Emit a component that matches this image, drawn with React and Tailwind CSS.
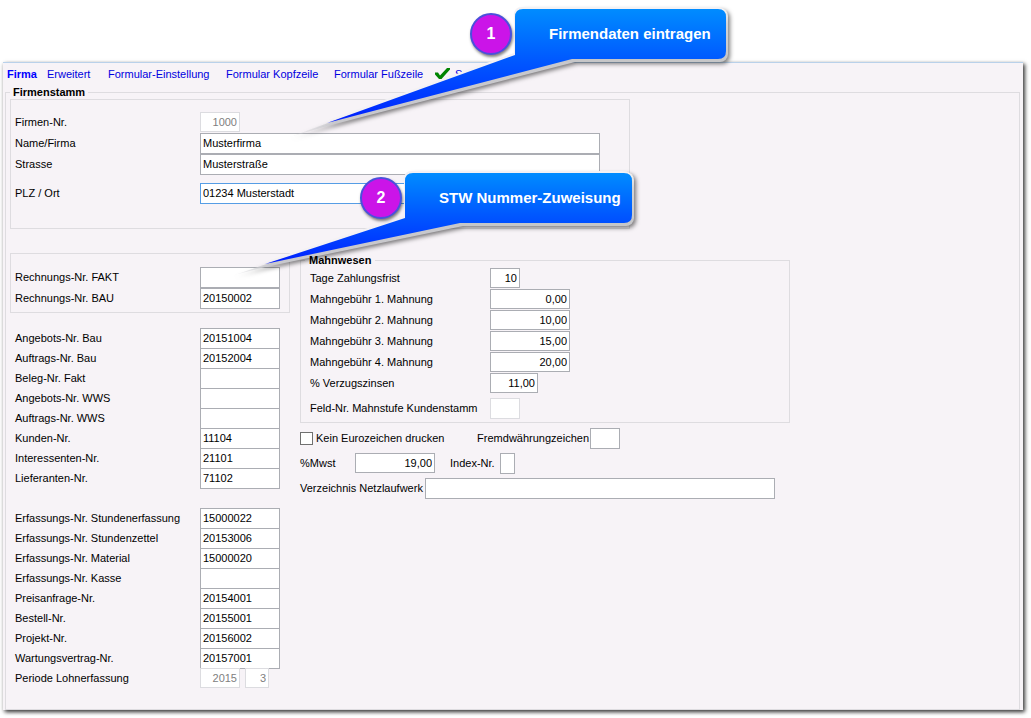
import React from "react";

const FIELD = "h-[21px] border bg-white px-[2px] pb-px outline-none";

function Row({ id, label, value = "", width = "w-20", border = "border-[#abadb3]", gap = "" }) {
  return (
    <div className={`flex items-start ${gap}`}>
      <label htmlFor={id} className="w-[185px] shrink-0 leading-5">{label}</label>
      <input id={id} defaultValue={value} className={`${FIELD} ${width} ${border}`} />
    </div>
  );
}

const NUMBERS = [
  ["Angebots-Nr. Bau", "20151004"],
  ["Auftrags-Nr. Bau", "20152004"],
  ["Beleg-Nr. Fakt", ""],
  ["Angebots-Nr. WWS", ""],
  ["Auftrags-Nr. WWS", ""],
  ["Kunden-Nr.", "11104"],
  ["Interessenten-Nr.", "21101"],
  ["Lieferanten-Nr.", "71102"],
];

const RECORDS = [
  ["Erfassungs-Nr. Stundenerfassung", "15000022"],
  ["Erfassungs-Nr. Stundenzettel", "20153006"],
  ["Erfassungs-Nr. Material", "15000020"],
  ["Erfassungs-Nr. Kasse", ""],
  ["Preisanfrage-Nr.", "20154001"],
  ["Bestell-Nr.", "20155001"],
  ["Projekt-Nr.", "20156002"],
  ["Wartungsvertrag-Nr.", "20157001"],
];

const DUNNING = [
  ["Tage Zahlungsfrist", "10", "w-[30px]"],
  ["Mahngebühr 1. Mahnung", "0,00", "w-20"],
  ["Mahngebühr 2. Mahnung", "10,00", "w-20"],
  ["Mahngebühr 3. Mahnung", "15,00", "w-20"],
  ["Mahngebühr 4. Mahnung", "20,00", "w-20"],
  ["% Verzugszinsen", "11,00", "w-12"],
];

const TABS = ["Erweitert", "Formular-Einstellung", "Formular Kopfzeile", "Formular Fußzeile"];

function Callout({ id, number, text, width, outline, tail, tipX, fadeX, depth, place, size }) {
  return (
    <div className={`absolute ${place} ${size} h-[50px] font-bold`}>
      <svg className="absolute inset-0 overflow-visible" width={width} height="50" aria-hidden="true">
        <defs>
          <linearGradient id={`${id}-fill`} gradientUnits="userSpaceOnUse" x1="0" y1="0" x2="0" y2={depth}>
            <stop offset="0" stopColor="#008cff" />
            <stop offset="0.45" stopColor="#0058ff" />
            <stop offset="0.85" stopColor="#0030ff" />
            <stop offset="1" stopColor="#0018ff" />
          </linearGradient>
          <linearGradient id={`${id}-rim`} gradientUnits="userSpaceOnUse" x1="0" y1="0" x2="0" y2="50">
            <stop offset="0" stopColor="#f2f2f2" />
            <stop offset="0.3" stopColor="#d4d4d6" />
            <stop offset="1" stopColor="#c6c6c8" />
          </linearGradient>
          <linearGradient id={`${id}-tip`} gradientUnits="userSpaceOnUse" x1={tipX} y1="0" x2={fadeX} y2="0">
            <stop offset="0" stopColor="#d8d8dc" stopOpacity="0" />
            <stop offset="1" stopColor="#c8c8cc" />
          </linearGradient>
        </defs>
        <g style={{ filter: "drop-shadow(2px 2px 2px rgba(0,0,0,0.5))" }}>
          <path d={tail} fill={`url(#${id}-tip)`} />
          <rect x="1" y="-1" width={width + 1} height="54" rx="8" fill={`url(#${id}-rim)`} />
        </g>
        <path d={outline} transform="translate(-1,-2)" fill="#f3f1f4" />
        <path d={outline} fill={`url(#${id}-fill)`} />
      </svg>
      <div className="absolute -left-[45px] top-1 flex size-[42px] items-center justify-center rounded-full border-2 border-[#4a50dc] bg-[#cb14e8] text-base text-white shadow-[1px_2px_3px_rgba(0,0,0,0.5)]">
        {number}
      </div>
      <div className="relative flex h-full items-center pl-[34px] text-[15px] whitespace-nowrap text-white">
        {text}
      </div>
    </div>
  );
}

export default function App() {
  return (
    <div className="relative flex min-h-screen flex-col bg-white pt-[62px] pr-2 pb-2 pl-[3px] font-['Liberation_Sans',Arial,sans-serif] text-[11px] text-black">
      <main className="flex flex-1 flex-col border-t border-[#b9d1ea] bg-[#f7f3f7] pr-[3px] pl-[2px] shadow-[2px_2px_4px_rgba(0,0,0,0.75),0_2px_4px_rgba(0,0,0,0.15)]">
        <nav className="grid h-[22px] grid-cols-[40px_61px_118px_108px_101px_auto] items-center justify-start pl-[2px] text-left text-[#0000e0]">
          <button className="text-left font-bold text-[#0000ff]">Firma</button>
          {TABS.map((t) => (
            <button key={t} className="text-left whitespace-nowrap">{t}</button>
          ))}
          <button className="flex items-center gap-[5px]">
            <svg width="15" height="12" viewBox="0 0 15 12" aria-hidden="true">
              <path d="M0 4.500h3l2 3 7-7.500h3v1.500L6.500 11H4L0 6.500Z" fill="#008400" />
            </svg>
            Speichern
          </button>
        </nav>

        <fieldset className="flex-1 border border-[#dedce0]">
          <legend className="ml-1 px-[3px] leading-[14px] font-bold">Firmenstamm</legend>
          <div className="px-1 pb-[20px]">
            <section className="w-[620px] border border-[#dedce0] pt-3 pb-6 pl-1">
              <div className="mb-px flex items-start">
                <label htmlFor="firmennr" className="w-[185px] leading-5">Firmen-Nr.</label>
                <input id="firmennr" readOnly defaultValue="1000" className="h-5 w-10 border border-[#dcdce0] bg-white px-[2px] text-right text-[#808080] outline-none" />
              </div>
              <Row id="name" label="Name/Firma" value="Musterfirma" width="w-[400px]" />
              <Row id="strasse" label="Strasse" value="Musterstraße" width="w-[400px]" gap="mb-2" />
              <Row id="ort" label="PLZ / Ort" value="01234 Musterstadt" width="w-[400px]" border="border-[#569de5]" />
            </section>

            <div className="mt-6 flex items-start gap-[10px]">
              <div className="w-[280px] shrink-0">
                <section className="border border-[#dedce0] pt-[13px] pb-[3px] pl-1">
                  <Row id="fakt" label="Rechnungs-Nr. FAKT" />
                  <Row id="bau" label="Rechnungs-Nr. BAU" value="20150002" />
                </section>
                <div className="flex flex-col gap-5 pt-[15px] pl-[5px]">
                  <div>
                    {NUMBERS.map(([l, v]) => (
                      <div key={l} className="h-5"><Row id={l} label={l} value={v} /></div>
                    ))}
                  </div>
                  <div>
                    {RECORDS.map(([l, v]) => (
                      <div key={l} className="h-5"><Row id={l} label={l} value={v} /></div>
                    ))}
                    <div className="flex h-5">
                      <label htmlFor="jahr" className="w-[185px] leading-5">Periode Lohnerfassung</label>
                      <input id="jahr" readOnly defaultValue="2015" className="mr-[5px] h-5 w-10 border border-[#dcdce0] bg-white px-[2px] text-right text-[#808080] outline-none" />
                      <input aria-label="Monat" readOnly defaultValue="3" className="h-5 w-6 border border-[#dcdce0] bg-white px-[2px] text-right text-[#808080] outline-none" />
                    </div>
                  </div>
                </div>
              </div>

              <div className="w-[490px]">
                <fieldset className="border border-[#dedce0] pb-[3px]">
                  <legend className="relative z-10 ml-1 px-1 leading-[14px] font-bold">Mahnwesen</legend>
                  <div className="pt-px pl-[9px]">
                    {DUNNING.map(([l, v, w]) => (
                      <div key={l} className="flex h-[21px] items-start">
                        <label htmlFor={l} className="w-[180px] leading-5">{l}</label>
                        <input id={l} defaultValue={v} className={`h-5 border border-[#abadb3] bg-white px-[2px] text-right outline-none ${w}`} />
                      </div>
                    ))}
                    <div className="mt-1 flex items-start">
                      <label htmlFor="stufe" className="w-[180px] leading-5">Feld-Nr. Mahnstufe Kundenstamm</label>
                      <input id="stufe" readOnly className="h-[21px] w-[30px] border border-[#dcdce0] bg-white outline-none" />
                    </div>
                  </div>
                </fieldset>

                <div className="flex flex-col gap-1 pt-[5px]">
                  <div className="flex w-80 items-center">
                    <label className="mr-auto flex items-center gap-[3px]">
                      <input type="checkbox" className="size-[13px] appearance-none border border-[#707070] bg-white" />
                      Kein Eurozeichen drucken
                    </label>
                    <label htmlFor="waehrung" className="mr-px whitespace-nowrap">Fremdwährungzeichen</label>
                    <input id="waehrung" className={`${FIELD} w-[30px] shrink-0 border-[#abadb3]`} />
                  </div>
                  <div className="flex items-start">
                    <label htmlFor="mwst" className="w-[55px] leading-5">%Mwst</label>
                    <input id="mwst" defaultValue="19,00" className="h-5 w-20 border border-[#abadb3] bg-white px-[2px] text-right outline-none" />
                    <label htmlFor="index" className="ml-[15px] w-[50px] leading-5">Index-Nr.</label>
                    <input id="index" className={`${FIELD} w-[15px] border-[#abadb3]`} />
                  </div>
                  <div className="flex items-start">
                    <label htmlFor="netz" className="w-[125px] leading-5 whitespace-nowrap">Verzeichnis Netzlaufwerk</label>
                    <input id="netz" className={`${FIELD} w-[350px] border-[#abadb3]`} />
                  </div>
                </div>
              </div>
            </div>
          </div>
        </fieldset>
      </main>

      <Callout
        id="c1" number="1" text="Firmendaten eintragen" width={211} depth={115}
        place="left-[515px] top-[9px]" size="w-[211px]"
        outline="M8 0H203Q211 0 211 8V42Q211 50 203 50H57L-188 114L0 46V8Q0 0 8 0Z"
        tail="M2 45L-228 129L-188 117L60 53Z" tipX={-228} fadeX={-180}
      />
      <Callout
        id="c2" number="2" text="STW Nummer-Zuweisung" width={227} depth={92}
        place="left-[405px] top-[173px]" size="w-[227px]"
        outline="M8 0H219Q227 0 227 8V42Q227 50 219 50H55L-140 91L0 45V8Q0 0 8 0Z"
        tail="M2 44L-174 103L-140 94L58 53Z" tipX={-174} fadeX={-135}
      />
    </div>
  );
}
